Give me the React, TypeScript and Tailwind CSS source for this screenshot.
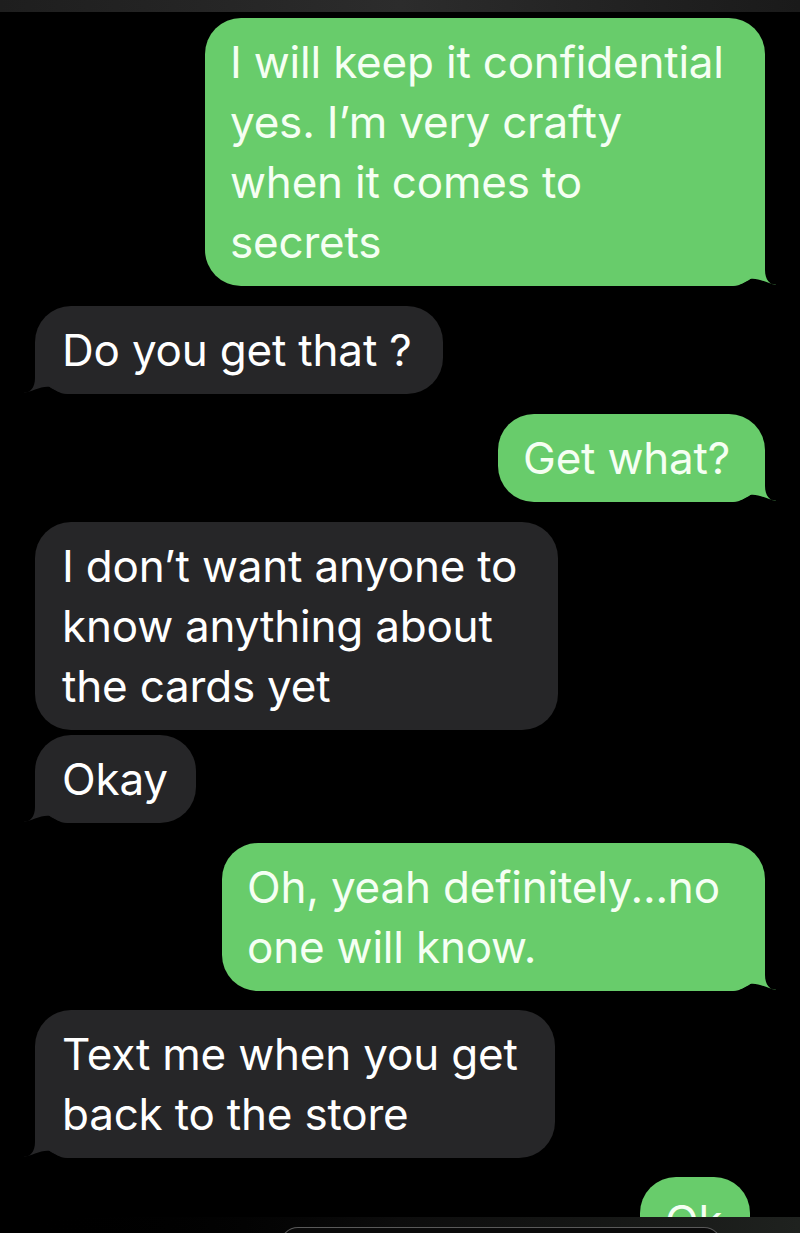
const font = { fontFamily: "Inter, 'Noto Sans', sans-serif" };

const Tail = ({ side, color }: { side: "left" | "right"; color: string }) => (
  <svg
    viewBox="-40 -40 52 40"
    className={
      side === "right"
        ? "absolute bottom-0 right-[-12px] h-[40px] w-[52px]"
        : "absolute bottom-0 left-[-12px] h-[40px] w-[52px] -scale-x-100"
    }
  >
    <path
      d="M0 -40 L0 -16 C0 -6 5 -1 12 -1 C4 -2 -8 -9 -15 -7 C-20 -5 -24 0 -32 0 L-40 0 L-40 -40 Z"
      fill={color}
    />
  </svg>
);

const Sent = ({ lines, w, tail = true, mr = "mr-[35px]" }: { lines: string[]; w: string; tail?: boolean; mr?: string }) => (
  <div className={`relative self-end rounded-[36px] bg-[#68cc6b] px-[25px] py-[14px] ${mr} ${w}`}>
    {tail && <Tail side="right" color="#68cc6b" />}
    {lines.map((l) => (
      <div key={l} className="relative whitespace-nowrap text-[44px] leading-[60px] tracking-[-0.2px] text-[#f5fff3]">
        {l}
      </div>
    ))}
  </div>
);

const Received = ({ lines, w, tail = true }: { lines: string[]; w: string; tail?: boolean }) => (
  <div className={`relative ml-[35px] rounded-[36px] bg-[#262628] px-[27px] py-[14px] ${w}`}>
    {tail && <Tail side="left" color="#262628" />}
    {lines.map((l) => (
      <div key={l} className="relative whitespace-nowrap text-[44px] leading-[60px] tracking-[-0.2px] text-white">
        {l}
      </div>
    ))}
  </div>
);

export default function App() {
  return (
    <div className="relative h-[1233px] w-[800px] overflow-hidden bg-black" style={font}>
      <div className="h-[12px] bg-gradient-to-r from-[#1e1e1e] via-[#2c2c2c] to-[#1a1a1a]" />
      <div className="flex flex-col pt-[6px]">
        <Sent
          w="w-[560px]"
          lines={["I will keep it confidential", "yes. I’m very crafty", "when it comes to", "secrets"]}
        />
        <div className="h-[20px]" />
        <Received w="w-[408px]" lines={["Do you get that ?"]} />
        <div className="h-[20px]" />
        <Sent w="w-[267px]" lines={["Get what?"]} />
        <div className="h-[20px]" />
        <Received
          w="w-[523px]"
          tail={false}
          lines={["I don’t want anyone to", "know anything about", "the cards yet"]}
        />
        <div className="h-[5px]" />
        <Received w="w-[161px]" lines={["Okay"]} />
        <div className="h-[20px]" />
        <Sent w="w-[543px]" lines={["Oh, yeah definitely...no", "one will know."]} />
        <div className="h-[19px]" />
        <Received w="w-[520px]" lines={["Text me when you get", "back to the store"]} />
        <div className="h-[19px]" />
        <Sent w="w-[110px]" tail={false} mr="mr-[50px]" lines={["Ok"]} />
      </div>
      <div className="absolute bottom-0 left-0 right-0 h-[16px] bg-gradient-to-r from-black via-[#0d0d0d] to-[#1f221f]">
        <div className="ml-[280px] mt-[10px] h-[20px] w-[442px] rounded-t-[18px] border-x border-t border-[#5a5a5a] bg-[#0a0a0a]" />
      </div>
    </div>
  );
}
